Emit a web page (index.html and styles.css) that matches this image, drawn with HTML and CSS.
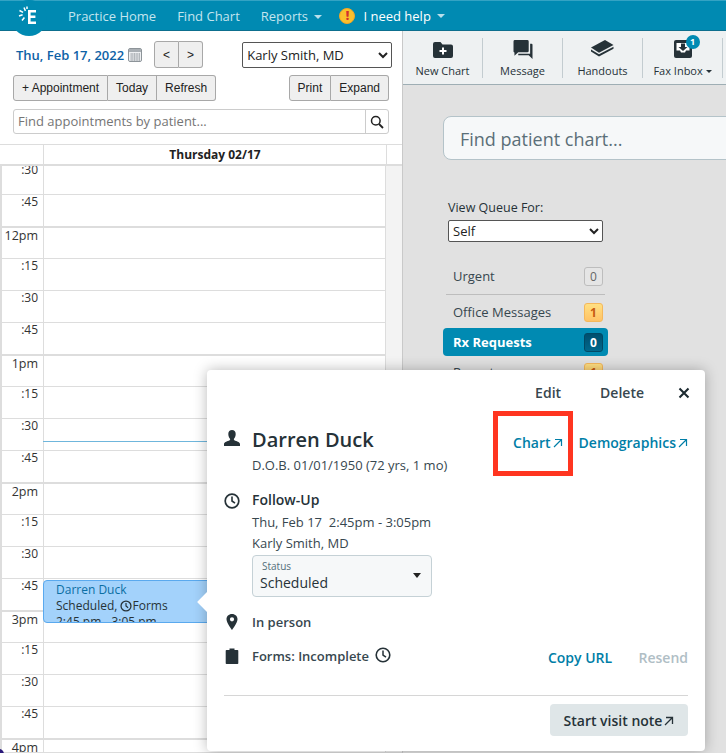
FILE: index.html
```html
<!DOCTYPE html>
<html lang="en">
<head>
<meta charset="utf-8">
<title>Schedule</title>
<link rel="stylesheet" href="styles.css">
</head>
<body>
<div class="page">
  <header class="topbar">
    <div class="logo">
      <svg viewBox="0 0 24 24" width="24" height="24" class="logo-svg">
        <path d="M11 6h8v2.400h-5.400v3.200h4.800V14h-4.800v3.600H19V20h-8z" fill="#fff"/>
        <path d="M7 3.500l1.400 3.400M2.500 6.500l3.600 1.800M2 12l3.600-1.200M5 16.500l2.400-3M10 2.500v2.500" stroke="#fff" stroke-width="1.500" fill="none"/>
      </svg>
    </div>
    <nav class="nav">
      <a class="nav-link">Practice Home</a>
      <a class="nav-link">Find Chart</a>
      <a class="nav-link">Reports <span class="caret"></span></a>
    </nav>
    <div class="help">
      <span class="warn">!</span>
      <span class="help-text">I need help</span>
      <span class="caret"></span>
    </div>
  </header>

  <main class="main">
    <section class="left">
      <div class="date-row">
        <span class="date">Thu, Feb 17, 2022</span>
        <svg class="cal-icon" viewBox="0 0 14 14" width="14" height="14">
          <rect x=".5" y=".5" width="13" height="13" rx="1.500" fill="#eef0f2" stroke="#8d9499"/>
          <rect x="1" y="1" width="12" height="3" fill="#a9afb4"/>
          <path d="M2 6h10M2 8h10M2 10h10M2 12h10M4 5v8M6.500 5v8M9 5v8M11.500 5v8" stroke="#a9afb4" stroke-width=".8"/>
        </svg>
        <div class="btn-group pager">
          <button class="btn">&lt;</button><button class="btn">&gt;</button>
        </div>
        <select class="native-select provider"><option>Karly Smith, MD</option></select>
      </div>
      <div class="action-row">
        <div class="btn-group">
          <button class="btn">+ Appointment</button><button class="btn">Today</button><button class="btn">Refresh</button>
        </div>
        <div class="btn-group">
          <button class="btn">Print</button><button class="btn">Expand</button>
        </div>
      </div>
      <div class="appt-search">
        <span class="appt-placeholder">Find appointments by patient...</span>
        <span class="appt-glass">
          <svg viewBox="0 0 14 14" width="14" height="14"><circle cx="5.800" cy="5.800" r="4.300" fill="none" stroke="#222" stroke-width="1.500"/><path d="M9 9l4 4" stroke="#222" stroke-width="1.800"/></svg>
        </span>
      </div>

      <div class="calendar">
        <div class="cal-head">
          <div class="cal-corner"></div>
          <div class="cal-day">Thursday 02/17</div>
          <div class="cal-gutter"></div>
        </div>
        <div class="cal-body">
          <div class="cal-rows">
            <div class="row"><span class="time">:30</span><span class="slot"></span></div>
            <div class="row"><span class="time">:45</span><span class="slot"></span></div>
            <div class="row hour"><span class="time">12pm</span><span class="slot"></span></div>
            <div class="row"><span class="time">:15</span><span class="slot"></span></div>
            <div class="row"><span class="time">:30</span><span class="slot"></span></div>
            <div class="row"><span class="time">:45</span><span class="slot"></span></div>
            <div class="row hour"><span class="time">1pm</span><span class="slot"></span></div>
            <div class="row"><span class="time">:15</span><span class="slot"></span></div>
            <div class="row"><span class="time">:30</span><span class="slot"></span></div>
            <div class="row"><span class="time">:45</span><span class="slot"></span></div>
            <div class="row hour"><span class="time">2pm</span><span class="slot"></span></div>
            <div class="row"><span class="time">:15</span><span class="slot"></span></div>
            <div class="row"><span class="time">:30</span><span class="slot"></span></div>
            <div class="row"><span class="time">:45</span><span class="slot"></span></div>
            <div class="row hour"><span class="time">3pm</span><span class="slot"></span></div>
            <div class="row"><span class="time">:15</span><span class="slot"></span></div>
            <div class="row"><span class="time">:30</span><span class="slot"></span></div>
            <div class="row"><span class="time">:45</span><span class="slot"></span></div>
            <div class="row hour"><span class="time">4pm</span><span class="slot"></span></div>
          </div>
          <div class="now-line"></div>
          <div class="event">
            <div class="event-name">Darren Duck</div>
            <div class="event-line">Scheduled, <svg class="ev-clock" viewBox="0 0 14 14" width="12" height="12"><circle cx="7" cy="7" r="5.800" fill="none" stroke="#263238" stroke-width="1.500"/><path d="M7 3.500V7l2.500 2" fill="none" stroke="#263238" stroke-width="1.400"/></svg>Forms</div>
            <div class="event-line">2:45 pm - 3:05 pm</div>
          </div>
        </div>
      </div>
    </section>

    <section class="right">
      <div class="toolbar">
        <div class="tool">
          <svg class="tool-folder" viewBox="0 0 20 16" width="20" height="16"><path d="M0 2a2 2 0 0 1 2-2h5.500l2 2.500H18a2 2 0 0 1 2 2V14a2 2 0 0 1-2 2H2a2 2 0 0 1-2-2z" fill="#263238"/><path d="M9 5.500h2V8h2.500v2H11v2.500H9V10H6.500V8H9z" fill="#fff"/></svg>
          <span>New Chart</span>
        </div>
        <div class="tool">
          <svg viewBox="0 0 20 20" width="20" height="19"><path d="M1.500 0h13A1.500 1.500 0 0 1 16 1.500v10a1.500 1.500 0 0 1-1.500 1.500H5l-4 3.500V13.200A1.500 1.500 0 0 1 0 11.500v-10A1.500 1.500 0 0 1 1.500 0z" fill="#263238"/><path d="M17.500 4H19a1 1 0 0 1 1 1v15l-4-4H5v-1.500h12.500z" fill="#263238"/></svg>
          <span>Message</span>
        </div>
        <div class="tool">
          <svg viewBox="0 0 23 18" width="23" height="18"><path d="M0 7.500L14 0l8.500 5-14.500 7.800z" fill="#263238"/><path d="M0 9.500l8 4.800 14.500-7.600v2L8 16.500 0 11.500z" fill="#263238"/></svg>
          <span>Handouts</span>
        </div>
        <div class="tool">
          <span class="fax-wrap">
            <svg viewBox="0 0 18 18" width="18" height="18"><path d="M2 0h14a2 2 0 0 1 2 2v14a2 2 0 0 1-2 2H2a2 2 0 0 1-2-2V2a2 2 0 0 1 2-2z" fill="#263238"/><path d="M2.500 10.500h3.500l1 2h4l1-2h3.500V3h-13z" fill="#fff"/><path d="M7 3.500h4V7h2.500L9 11 4.500 7H7z" fill="#263238"/></svg>
            <span class="fax-badge">1</span>
          </span>
          <span>Fax Inbox <i class="mini-caret"></i></span>
        </div>
      </div>
      <div class="right-body">
        <div class="find-chart">Find patient chart...</div>
        <div class="queue">
          <label class="queue-label">View Queue For:</label>
          <select class="native-select queue-select"><option>Self</option></select>
          <ul class="queue-list">
            <li class="q-item q-urgent"><span>Urgent</span><b class="badge">0</b></li>
            <li class="q-item"><span>Office Messages</span><b class="badge warn-badge">1</b></li>
            <li class="q-item q-active"><span>Rx Requests</span><b class="badge dark-badge">0</b></li>
            <li class="q-item"><span>Reports</span><b class="badge warn-badge">1</b></li>
          </ul>
        </div>
      </div>
    </section>
  </main>

  <aside class="popover">
    <span class="arrow"></span>
    <div class="pop-actions">
      <a class="pop-act">Edit</a>
      <a class="pop-act">Delete</a>
      <svg class="pop-x" viewBox="0 0 12 12" width="12" height="12"><path d="M1.500 1.500l9 9M10.500 1.500l-9 9" stroke="#1c2a30" stroke-width="2.100"/></svg>
    </div>
    <div class="pop-patient">
      <svg class="pop-ic" viewBox="0 0 16 16" width="16" height="16"><path d="M8 0c2.200 0 3.700 1.600 3.700 3.900C11.700 6.300 10.500 8.300 9.800 9c0 .8.500 1.300 1.500 1.700 2.200.8 4.700 1.300 4.700 3.500V16H0v-1.800c0-2.200 2.500-2.700 4.700-3.500 1-.4 1.500-.9 1.500-1.700-.7-.7-1.900-2.700-1.900-5.100C4.300 1.600 5.800 0 8 0z" fill="#263238"/></svg>
      <div class="pop-who">
        <div class="pop-name">Darren Duck</div>
        <div class="pop-dob">D.O.B. 01/01/1950 (72 yrs, 1 mo)</div>
      </div>
      <div class="pop-links">
        <a class="link chart-link">Chart<svg class="ne" viewBox="0 0 10 10" width="10" height="10"><path d="M2 1.500h6.500V8M8.500 1.500L1 9" fill="none" stroke="currentColor" stroke-width="1.200"/></svg></a>
        <a class="link">Demographics<svg class="ne" viewBox="0 0 10 10" width="10" height="10"><path d="M2 1.500h6.500V8M8.500 1.500L1 9" fill="none" stroke="currentColor" stroke-width="1.200"/></svg></a>
      </div>
    </div>
    <div class="pop-visit">
      <svg class="pop-ic" viewBox="0 0 16 16" width="16" height="16"><circle cx="8" cy="8" r="6.800" fill="none" stroke="#263238" stroke-width="1.700"/><path d="M8 3.500V8l3 2.200" fill="none" stroke="#263238" stroke-width="1.600"/></svg>
      <div class="pop-visit-text">
        <div class="pop-type">Follow-Up</div>
        <div class="pop-sub">Thu, Feb 17&nbsp; 2:45pm - 3:05pm</div>
        <div class="pop-sub pop-prov">Karly Smith, MD</div>
        <div class="status-box">
          <div>
            <div class="status-label">Status</div>
            <div class="status-value">Scheduled</div>
          </div>
          <i class="status-caret"></i>
        </div>
      </div>
    </div>
    <div class="pop-place">
      <svg class="pop-ic" viewBox="0 0 16 16" width="16" height="16"><path d="M8 0C4.700 0 2.500 2.400 2.500 5.300 2.500 9 8 16 8 16s5.500-7 5.500-10.700C13.500 2.400 11.300 0 8 0zm0 7.400a2.100 2.100 0 1 1 0-4.200 2.100 2.100 0 0 1 0 4.200z" fill="#263238"/></svg>
      <span class="pop-strong">In person</span>
    </div>
    <div class="pop-forms">
      <svg class="pop-ic" viewBox="0 0 16 16" width="16" height="16"><path d="M2.500 2H5.500V.5h5V2h3a.8.8 0 0 1 .8.8V15.200a.8.8 0 0 1-.8.8h-11a.8.8 0 0 1-.8-.8V2.800A.8.8 0 0 1 2.500 2z" fill="#263238"/></svg>
      <span class="pop-strong">Forms: Incomplete</span>
      <svg class="forms-clock" viewBox="0 0 16 16" width="16" height="16"><circle cx="8" cy="8" r="6.800" fill="none" stroke="#263238" stroke-width="1.600"/><path d="M8 3.500V8l3 2.200" fill="none" stroke="#263238" stroke-width="1.500"/></svg>
      <div class="forms-actions">
        <a class="link">Copy URL</a>
        <a class="link muted">Resend</a>
      </div>
    </div>
    <div class="pop-foot">
      <button class="start-btn">Start visit note<svg class="ne" viewBox="0 0 10 10" width="10" height="10"><path d="M2 1.500h6.500V8M8.500 1.500L1 9" fill="none" stroke="currentColor" stroke-width="1.300"/></svg></button>
    </div>
    <div class="red-box"></div>
  </aside>
  <span class="corner-logo"></span>
</div>
</body>
</html>
```

FILE: styles.css
```css
* { box-sizing: border-box; }
html, body { margin: 0; padding: 0; height: 100%; }
body { font-family: "Open Sans", "Noto Sans", sans-serif; color: #263238; background: #fff; overflow: hidden; }
.page { position: relative; width: 726px; height: 753px; overflow: hidden; display: flex; flex-direction: column; }

/* top bar */
.topbar { height: 31px; flex: none; display: flex; align-items: center; background: #008ab2; border-top: 1px solid #33a3c4; border-bottom: 1px solid #0d6f8e; position: relative; z-index: 3; font-size: 13px; }
.logo { width: 36px; height: 36px; border-radius: 50%; background: #008ab2; margin-left: 11px; flex: none; display: flex; align-items: center; justify-content: center; align-self: flex-start; margin-top: -1px; padding-bottom: 5px; }
.logo-svg { display: block; }
.nav { display: flex; gap: 21px; margin-left: 21px; }
.nav-link { color: #c4e5ef; white-space: nowrap; }
.caret { display: inline-block; width: 0; height: 0; border-left: 4px solid transparent; border-right: 4px solid transparent; border-top: 4px solid #b8dfeb; margin-left: 3px; vertical-align: 2px; }
.help { display: flex; align-items: center; margin-left: 17px; }
.warn { width: 16px; height: 16px; border-radius: 50%; background: #fbc02d; border: 1.500px solid #f5a623; color: #d32f2f; font-size: 12px; font-weight: 800; line-height: 13px; text-align: center; }
.help-text { color: #fff; margin-left: 8px; }
.help .caret { margin-left: 6px; margin-top: 1px; }

/* layout */
.main { flex: 1; display: flex; min-height: 0; }
.left { width: 403px; flex: none; display: flex; flex-direction: column; background: #fff; border-right: 1px solid #c9c9c9; }
.right { flex: 1; display: flex; flex-direction: column; background: #e1e1e1; min-width: 0; }

/* left controls */
.date-row { display: flex; align-items: center; height: 27px; margin-top: 10px; padding-left: 16px; }
.date { font-size: 13px; font-weight: 600; color: #0d62a6; white-space: nowrap; }
.cal-icon { margin-left: 4px; flex: none; }
.pager { margin-left: 12px; }
.pager .btn { width: 24.500px; padding: 0; height: 27px; }
.native-select { font-family: "Open Sans", sans-serif; font-size: 13px; color: #222; background: #fff; border: 1px solid #555; border-radius: 2px; padding: 0; }
.provider { width: 150px; height: 26px; margin-left: 39px; }
.btn-group { display: inline-flex; flex: none; }
.btn { font-family: "Liberation Sans", Arial, sans-serif; font-size: 12px; color: #222; background: #efefef; border: 1px solid #a8a8a8; border-left-width: 0; height: 26px; padding: 0 8px; margin: 0; }
.btn:first-child { border-left-width: 1px; border-radius: 3px 0 0 3px; }
.btn:last-child { border-radius: 0 3px 3px 0; }
.action-row { display: flex; justify-content: space-between; padding: 0 13px; margin-top: 7px; }
.appt-search { display: flex; margin: 8px 13px 0; height: 25px; border: 1px solid #ccc; border-radius: 3px; }
.appt-placeholder { flex: 1; font-size: 13px; line-height: 23px; color: #757575; padding-left: 4px; }
.appt-glass { width: 23px; border-left: 1px solid #ccc; display: flex; align-items: center; justify-content: center; }

/* calendar */
.calendar { flex: 1; min-height: 0; margin-top: 10px; display: flex; flex-direction: column; border-bottom: 1px solid #ddd; }
.cal-head { display: flex; height: 22px; flex: none; border-top: 1px solid #ddd; border-bottom: 2px solid #ddd; }
.cal-corner { width: 44px; border-right: 1px solid #ddd; }
.cal-day { flex: 1; text-align: center; font-size: 12px; font-weight: 700; color: #222; line-height: 20px; }
.cal-gutter { width: 16px; border-left: 1px solid #ddd; }
.cal-body { position: relative; flex: 1; min-height: 0; overflow: hidden; border-left: 2px solid #ddd; }
.cal-rows { margin-top: -4px; }
.row { display: flex; height: 32px; border-top: 1px solid #ddd; margin-right: 15px; position: relative; }
.row.hour { border-top-width: 2px; }
.time { width: 41px; flex: none; text-align: right; padding-right: 5px; font-size: 12px; line-height: 14px; color: #333; background: #fff; }
.row.hour .time { font-size: 12.500px; line-height: 16px; }
.slot { flex: 1; border-left: 1px solid #ddd; }
.cal-body::after { content: ""; position: absolute; top: 0; right: 0; bottom: 0; width: 16px; background: #f3f3f3; border-left: 1px solid #ddd; }
.now-line { position: absolute; left: 41px; right: 16px; top: 275px; border-top: 1px solid #6fb6dc; }
.event { position: absolute; left: 41px; width: 176px; top: 414px; height: 43px; background: #a3d2fb; border: 1px solid #5aa9ee; border-radius: 4px; padding: 1px 0 0 12px; font-size: 12px; line-height: 16px; color: #263238; overflow: hidden; }
.event-name { color: #0b6ea3; }
.event-line { white-space: nowrap; }
.ev-clock { vertical-align: -2px; }

/* right */
.toolbar { display: flex; height: 54px; flex: none; background: #eef1f2; border-bottom: 1px solid #9eaeb4; padding-top: 7px; }
.tool { width: 80px; height: 40px; flex: none; border-right: 1px solid #c3ccd0; display: flex; flex-direction: column; align-items: center; justify-content: space-between; font-size: 11px; line-height: 16px; color: #263238; white-space: nowrap; padding-top: 2px; }
.tool > span:last-child { margin-bottom: -1px; }
.tool-folder { margin-top: 2px; }
.fax-wrap { position: relative; display: block; height: 18px; }
.fax-wrap svg { display: block; }
.fax-badge { position: absolute; left: 12px; top: -5px; width: 14px; height: 14px; border-radius: 50%; background: #008ab2; color: #fff; font-size: 9px; font-weight: 700; line-height: 14px; text-align: center; }
.mini-caret { display: inline-block; border-left: 3px solid transparent; border-right: 3px solid transparent; border-top: 3.500px solid #263238; vertical-align: 2px; }
.right-body { flex: 1; padding: 31px 0 0 40px; min-height: 0; overflow: hidden; }
.find-chart { width: 340px; height: 44px; background: #f6f8f9; border: 1px solid #b4c3c9; border-radius: 8px; font-size: 18px; line-height: 44px; padding-left: 16px; color: #5b6f78; white-space: nowrap; }
.queue { margin: 38px 0 0 0; width: 165px; }
.queue-label { display: block; margin-left: 5px; font-size: 12.500px; line-height: 20px; height: 18px; color: #263238; }
.queue-select { display: block; margin: 4px 0 0 5px; width: 155px; height: 22px; }
.queue-list { list-style: none; margin: 22px 0 0; padding: 0; }
.q-item { display: flex; justify-content: space-between; align-items: center; height: 28px; padding: 0 5px 0 10px; font-size: 13px; color: #37474f; border-radius: 4px; }
.q-urgent { height: 31px; margin: 0 3px 3px; padding: 0 2px 6px 7px; border-radius: 0; border-bottom: 1px solid #bdbdbd; }
.q-active { background: #008ab2; color: #fff; font-weight: 700; margin-top: 2px; }
.q-active + .q-item { margin-top: 2px; }
.badge { width: 19px; height: 19px; border-radius: 3px; border: 1px solid #bdbdbd; background: #e5e5e5; color: #666; font-size: 12px; font-weight: 400; line-height: 17px; text-align: center; flex: none; }
.warn-badge { background: linear-gradient(#ffe082, #ffc266); border-color: #f5b85b; color: #c75b12; font-weight: 700; }
.dark-badge { background: linear-gradient(#004f6e, #00688c); border-color: #004a66; color: #fff; font-weight: 700; }

/* popover */
.popover { position: absolute; left: 207px; top: 370px; width: 498px; height: 381px; background: #fff; border-radius: 4px; box-shadow: 0 0 14px rgba(0, 0, 0, .28); padding: 0 17px; z-index: 5; font-size: 13px; color: #37474f; }
.arrow { position: absolute; left: -7px; top: 225px; width: 14px; height: 14px; background: #fff; transform: rotate(45deg); }
.pop-actions { display: flex; justify-content: flex-end; align-items: center; height: 23px; margin-top: 11px; font-size: 14px; font-weight: 600; }
.pop-act { margin-right: 39px; }
.pop-act:nth-child(2) { margin-right: 34px; }
.pop-x { margin-right: -2px; }
.pop-patient { display: flex; align-items: flex-start; margin-top: 22px; }
.pop-ic { flex: none; width: 16px; height: 16px; margin-right: 12px; }
.pop-patient .pop-ic { margin-top: 4px; }
.pop-who { flex: 1; }
.pop-name { font-size: 20px; font-weight: 600; line-height: 28px; color: #263238; }
.pop-dob { font-size: 13px; line-height: 18px; margin-top: 2px; }
.pop-links { display: flex; justify-content: flex-end; gap: 16px; margin: 7px 0 0; }
.link { color: #007ea7; font-size: 14px; font-weight: 600; white-space: nowrap; }
.link.muted { color: #b0bec5; margin-left: 23px; }
.ne { margin-left: 2px; vertical-align: 0; }
.pop-visit { display: flex; margin-top: 16px; }
.pop-visit .pop-ic { margin-top: 3px; }
.pop-type { font-size: 14px; font-weight: 600; line-height: 20px; color: #263238; }
.pop-sub { font-size: 13px; line-height: 21px; margin-top: 2px; white-space: nowrap; }
.pop-prov { margin-top: 0; }
.status-box { display: flex; align-items: center; justify-content: space-between; width: 180px; height: 42px; margin-top: 1px; background: #f6f8f9; border: 1px solid #c5d1d6; border-radius: 4px; padding: 0 10px 0 7px; }
.status-label { font-size: 10px; line-height: 12px; color: #546e7a; margin-left: 2px; }
.status-value { font-size: 14px; line-height: 19px; margin-top: 1px; color: #263238; }
.status-caret { border-left: 4.500px solid transparent; border-right: 4.500px solid transparent; border-top: 5px solid #222; margin-top: -2px; }
.pop-place { display: flex; align-items: center; margin-top: 16px; height: 18px; }
.pop-strong { font-size: 13px; font-weight: 600; color: #37474f; white-space: nowrap; }
.pop-forms { display: flex; align-items: center; margin-top: 15px; height: 20px; }
.forms-clock { margin-left: 6px; margin-top: -2px; flex: none; }
.forms-actions { margin-left: auto; padding-top: 3px; }
.pop-foot { margin-top: 29px; border-top: 1px solid #d6d6d6; padding-top: 8px; display: flex; justify-content: flex-end; }
.start-btn { font-family: inherit; font-size: 14px; font-weight: 600; color: #263238; background: #dfe6e8; border: 0; border-radius: 4px; width: 138px; height: 32px; padding: 0; white-space: nowrap; }
.red-box { position: absolute; left: 286px; top: 41px; width: 80px; height: 65px; border: 5px solid #ff3520; pointer-events: none; }
.corner-logo { position: absolute; left: -6px; bottom: -6px; width: 10px; height: 10px; background: #2b1a7a; border-radius: 50%; z-index: 4; }
```
